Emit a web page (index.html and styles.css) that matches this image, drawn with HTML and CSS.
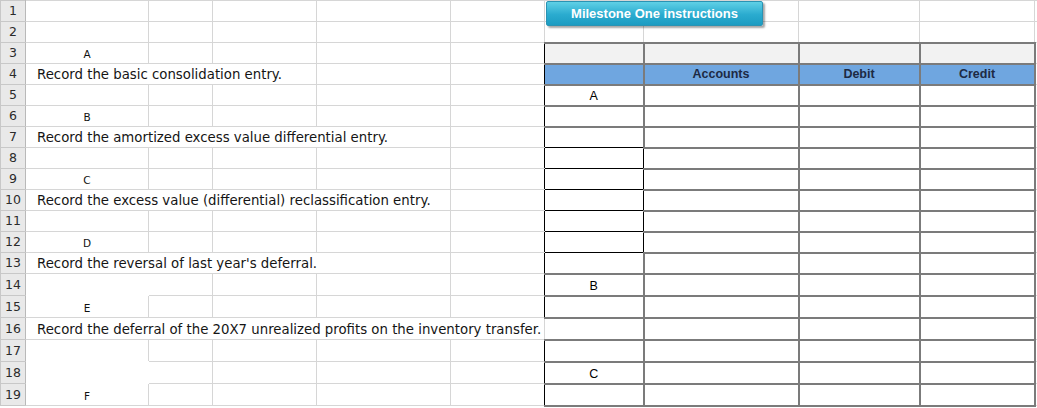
FILE: index.html
```html
<!DOCTYPE html>
<html>
<head>
<meta charset="utf-8">
<link rel="stylesheet" href="styles.css">
</head>
<body>
<div class="sheet">
<table class="grid">
<colgroup>
<col class="c-h"><col class="c-a"><col class="c-b"><col class="c-c"><col class="c-d"><col class="c-e"><col class="c-g"><col class="c-h2"><col class="c-i"><col class="c-j"><col class="c-k">
</colgroup>
<tr class="r21"><td class="rh">1</td><td></td><td></td><td></td><td></td><td></td><td></td><td></td><td></td><td></td><td></td></tr>
<tr class="r21"><td class="rh">2</td><td></td><td></td><td></td><td></td><td></td><td></td><td></td><td></td><td></td><td></td></tr>
<tr class="r21"><td class="rh">3</td><td class="lbl">A</td><td></td><td></td><td></td><td class="edge"></td><td class="t tg tl">&nbsp;</td><td class="t tg"></td><td class="t tg"></td><td class="t tg"></td><td></td></tr>
<tr class="r21"><td class="rh">4</td><td class="txt" colspan="3">Record the basic consolidation entry.</td><td></td><td class="edge"></td><td class="t tb tl"></td><td class="t tb">Accounts</td><td class="t tb">Debit</td><td class="t tb">Credit</td><td></td></tr>
<tr class="r21"><td class="rh">5</td><td></td><td></td><td></td><td></td><td class="edge"></td><td class="t tl tv">A</td><td class="t"></td><td class="t"></td><td class="t"></td><td></td></tr>
<tr class="r21"><td class="rh">6</td><td class="lbl">B</td><td></td><td></td><td></td><td class="edge"></td><td class="t tl"></td><td class="t"></td><td class="t"></td><td class="t"></td><td></td></tr>
<tr class="r21"><td class="rh">7</td><td class="txt" colspan="4">Record the amortized excess value differential entry.</td><td class="edge"></td><td class="t tl kb"></td><td class="t"></td><td class="t"></td><td class="t"></td><td></td></tr>
<tr class="r21"><td class="rh">8</td><td></td><td></td><td></td><td></td><td class="edge"></td><td class="t tl k"></td><td class="t kl"></td><td class="t"></td><td class="t"></td><td></td></tr>
<tr class="r21"><td class="rh">9</td><td class="lbl">C</td><td></td><td></td><td></td><td class="edge"></td><td class="t tl k"></td><td class="t kl"></td><td class="t"></td><td class="t"></td><td></td></tr>
<tr class="r21"><td class="rh">10</td><td class="txt" colspan="4">Record the excess value (differential) reclassification entry.</td><td class="edge"></td><td class="t tl k"></td><td class="t kl"></td><td class="t"></td><td class="t"></td><td></td></tr>
<tr class="r21"><td class="rh">11</td><td></td><td></td><td></td><td></td><td class="edge"></td><td class="t tl k"></td><td class="t kl"></td><td class="t"></td><td class="t"></td><td></td></tr>
<tr class="r21"><td class="rh">12</td><td class="lbl">D</td><td></td><td></td><td></td><td class="edge"></td><td class="t tl k"></td><td class="t kl"></td><td class="t"></td><td class="t"></td><td></td></tr>
<tr class="r21"><td class="rh">13</td><td class="txt" colspan="4">Record the reversal of last year's deferral.</td><td class="edge"></td><td class="t tl kt"></td><td class="t"></td><td class="t"></td><td class="t"></td><td></td></tr>
<tr class="r22"><td class="rh">14</td><td class="wb wr"></td><td></td><td></td><td></td><td class="edge"></td><td class="t tl tv">B</td><td class="t"></td><td class="t"></td><td class="t"></td><td></td></tr>
<tr class="r22"><td class="rh">15</td><td class="lbl">E</td><td></td><td></td><td></td><td class="edge"></td><td class="t tl"></td><td class="t"></td><td class="t"></td><td class="t"></td><td></td></tr>
<tr class="r22"><td class="rh">16</td><td class="txt" colspan="5">Record the deferral of the 20X7 unrealized profits on the inventory transfer.</td><td class="t tl"></td><td class="t"></td><td class="t"></td><td class="t"></td><td></td></tr>
<tr class="r22"><td class="rh">17</td><td class="wb"></td><td></td><td></td><td></td><td class="edge"></td><td class="t tl"></td><td class="t"></td><td class="t"></td><td class="t"></td><td></td></tr>
<tr class="r22"><td class="rh">18</td><td class="wb wr"></td><td></td><td></td><td></td><td class="edge"></td><td class="t tl tv">C</td><td class="t"></td><td class="t"></td><td class="t"></td><td></td></tr>
<tr class="r22"><td class="rh">19</td><td class="lbl">F</td><td></td><td></td><td></td><td class="edge"></td><td class="t tl"></td><td class="t"></td><td class="t"></td><td class="t"></td><td></td></tr>
</table>
<div class="btn">Milestone One instructions</div>
</div>
</body>
</html>
```
FILE: styles.css
```css
html, body {
  margin: 0;
  padding: 0;
  background: #fff;
  overflow: hidden;
}
.sheet {
  position: relative;
  width: 1037px;
  height: 408px;
  overflow: hidden;
}
.grid {
  border-collapse: collapse;
  table-layout: fixed;
  width: 1057px;
  font-family: "DejaVu Sans", Verdana, sans-serif;
  font-size: 12px;
  color: #111;
}
.c-h { width: 25px; }
.c-a { width: 123px; }
.c-b { width: 64px; }
.c-c { width: 104px; }
.c-d { width: 134px; }
.c-e { width: 94px; }
.c-g { width: 99px; }
.c-h2 { width: 155px; }
.c-i { width: 121px; }
.c-j { width: 115px; }
.c-k { width: 23px; }
.r21 { height: 21px; }
.r22 { height: 22px; }
.grid td {
  border: 1px solid #d6d6d6;
  padding: 0;
  white-space: nowrap;
  overflow: visible;
  line-height: 14px;
  vertical-align: middle;
}
.grid td.rh {
  background: #e9e9e9;
  border-color: #c8c8c8;
  border-right-color: #b9b9b9;
  text-align: center;
  color: #2b2b2b;
  font-size: 12.5px;
}
.grid td.lbl {
  text-align: center;
  font-size: 10.5px;
  padding-top: 2px;
}
.grid td.txt {
  padding-left: 11px;
  padding-top: 2px;
  font-size: 13.3px;
  color: #151515;
}
.grid td.wb {
  border-bottom: 1px solid #fff;
}
.grid td.wr {
  border-right: 1px solid #fff;
}
.grid td.edge {
  border-right: 1px solid #000;
}
.grid td.t {
  border: 2px solid #7b7b7b;
  text-align: center;
  font-family: "Liberation Sans", Arial, sans-serif;
  font-size: 12.5px;
  color: #000;
}
.grid td.tl {
  border-left: 1px solid #000;
}
.grid td.tg {
  background: #f2f2f2;
}
.grid td.tb {
  background: #6fa6e0;
  font-weight: bold;
  color: #1d2a44;
  font-size: 12.5px;
}
.grid td.tv {
  padding-top: 2px;
}
.grid td.k {
  border-top: 1px solid #000;
  border-bottom: 1px solid #000;
  border-right: 1px solid #000;
}
.grid td.kb {
  border-bottom: 1px solid #000;
}
.grid td.kt {
  border-top: 1px solid #000;
}
.grid td.kl {
  border-left: 1px solid #000;
}
.btn {
  position: absolute;
  left: 546px;
  top: 1px;
  width: 217px;
  height: 25px;
  box-sizing: border-box;
  border: 1px solid #2a93b3;
  border-radius: 2px;
  background: linear-gradient(#5fd0e6, #2aabcf 55%, #1c9cc2);
  box-shadow: 2px 2px 2px rgba(0, 0, 0, 0.35);
  color: #fff;
  font-family: "Liberation Sans", Arial, sans-serif;
  font-weight: bold;
  font-size: 13px;
  line-height: 23px;
  text-align: center;
}
```
